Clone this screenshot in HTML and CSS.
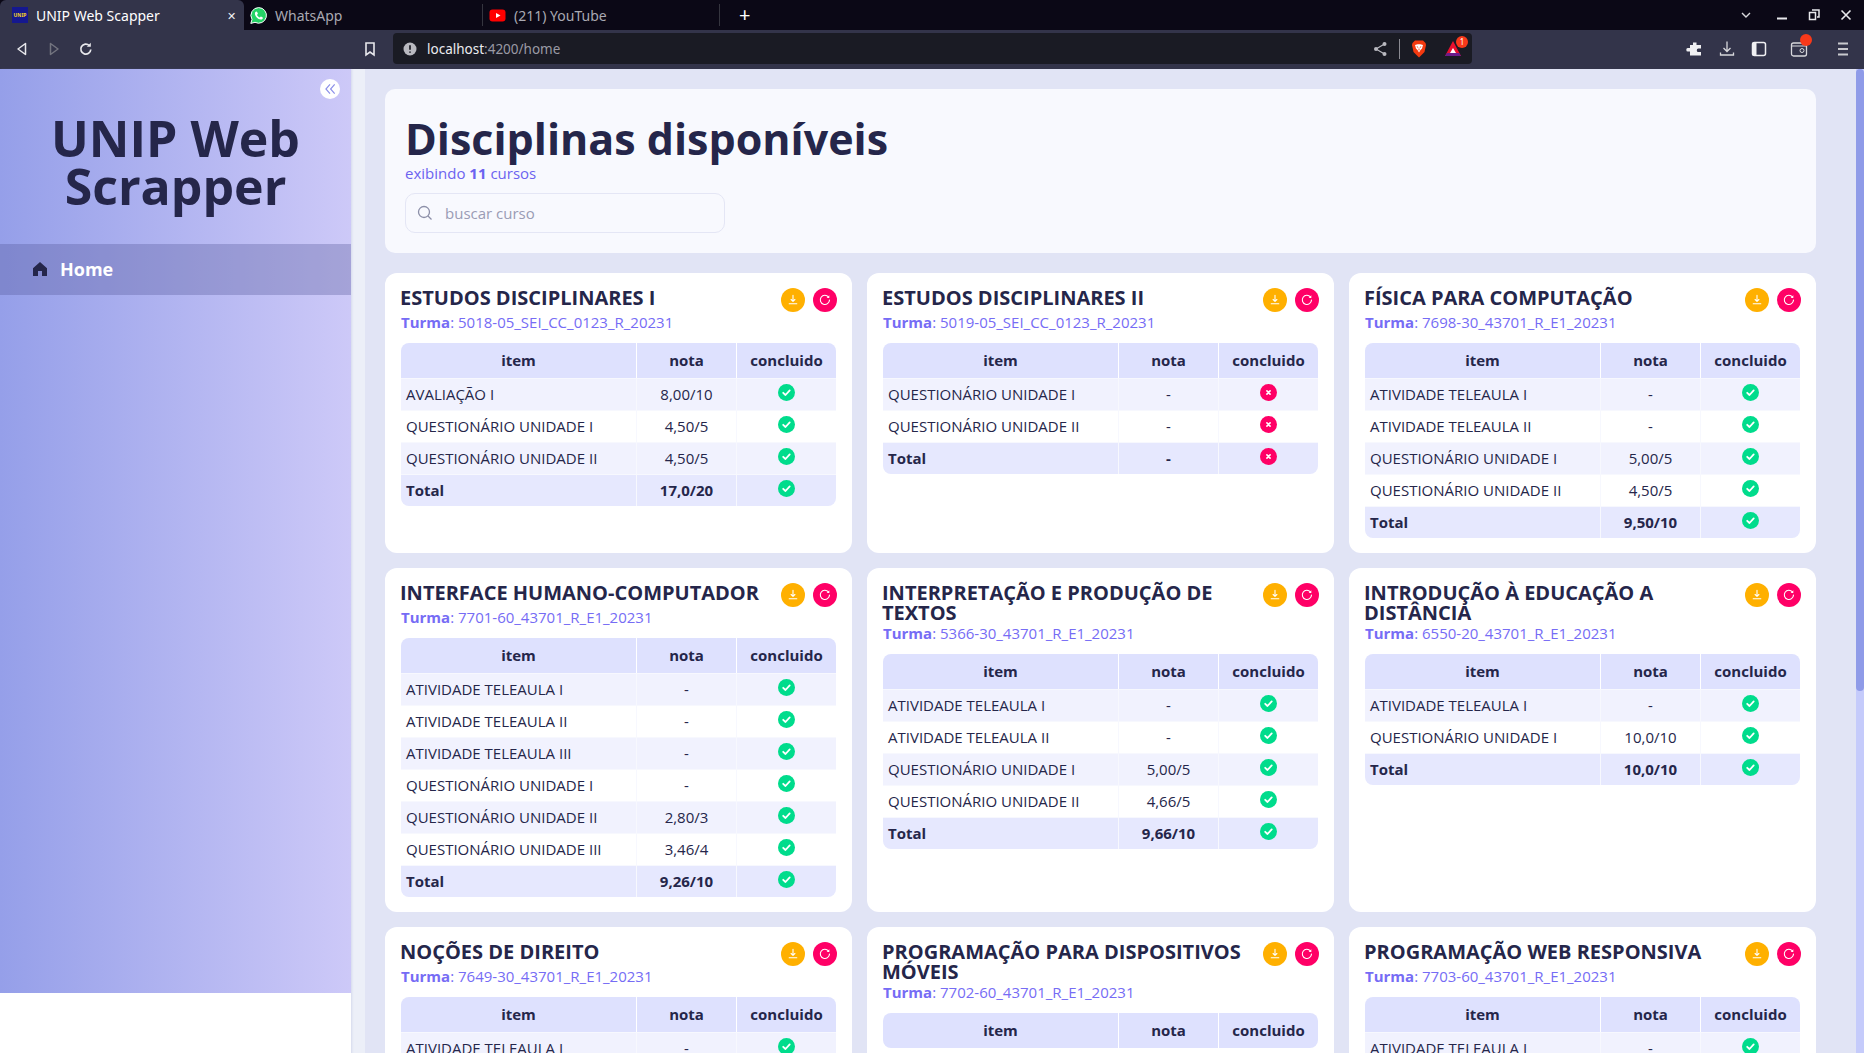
FILE: index.html
```html
<!DOCTYPE html>
<html lang="pt-BR">

<head>
    <meta charset="UTF-8">
    <title>UNIP Web Scapper</title>
    <link rel="stylesheet" href="styles.css">
</head>

<body>
    <svg class="icon-defs" width="0" height="0">
        <symbol id="ok" viewBox="0 0 17 17">
            <circle cx="8.5" cy="8.5" r="8.5" fill="#00dc8c"/>
            <path d="M5.2 8.8l2.3 2.2 4.2-4.6" fill="none" stroke="#fff" stroke-width="1.8" stroke-linecap="round" stroke-linejoin="round"/>
        </symbol>
        <symbol id="fail" viewBox="0 0 17 17">
            <circle cx="8.5" cy="8.5" r="8.5" fill="#ff0066"/>
            <path d="M6.9 6.9l3.2 3.2M10.1 6.9l-3.2 3.2" fill="none" stroke="#fff" stroke-width="1.6" stroke-linecap="round"/>
        </symbol>
        <symbol id="down" viewBox="0 0 24 24">
            <path d="M12 7.2v6M10.1 11.5L12 13.3l1.9-1.8M8.2 15.8h7.6" fill="none" stroke="#fff" stroke-width="1.1" stroke-linecap="round" stroke-linejoin="round"/>
        </symbol>
        <symbol id="redo" viewBox="0 0 24 24">
            <path d="M15.5 9a4.6 4.6 0 1 0 1 3" fill="none" stroke="#fff" stroke-width="1.1" stroke-linecap="round"/>
            <path d="M16.3 7.3v2.6h-2.6z" fill="#fff"/>
        </symbol>
    </svg>

    <!-- barra do navegador -->
    <div class="tabbar">
        <div class="tab tab-active">
            <span class="favicon-unip">UNIP</span>
            <span class="tab-title">UNIP Web Scapper</span>
            <span class="tab-close">&#10005;</span>
        </div>
        <div class="tab">
            <svg class="favicon" viewBox="0 0 17 17">
                <path d="M8.7.6a7.8 7.8 0 0 0-6.7 11.8L.8 16.4l4.2-1.1A7.8 7.8 0 1 0 8.7.6z" fill="#25d366" stroke="#fff" stroke-width="1"/>
                <path d="M6.2 4.6c-.4 0-1.3.7-1.3 2 0 2.5 3.1 6 5.9 6 1.3 0 2.1-1 2.1-1.7 0-.4-1.7-1.3-2-1.3-.4 0-.8.9-1.1.9-.8 0-2.7-1.8-2.7-2.6 0-.4.8-.7.8-1.1 0-.3-.7-2.200-1.700-2.200z" fill="#fff"/>
            </svg>
            <span class="tab-title">WhatsApp</span>
        </div>
        <div class="tab tab-sep">
            <svg class="favicon" viewBox="0 0 17 17">
                <rect x="0.5" y="2.5" width="16" height="12" rx="3" fill="#f00"/>
                <path d="M7 6l4.5 2.5L7 11z" fill="#fff"/>
            </svg>
            <span class="tab-title">(211) YouTube</span>
        </div>
        <div class="tab-new">+</div>
        <div class="window-btns">
            <svg viewBox="0 0 14 14"><path d="M3 5l4 4 4-4" fill="none" stroke="#d8d8dc" stroke-width="1.4"/></svg>
            <svg viewBox="0 0 14 14"><path d="M2 10.5h10" stroke="#e8e8ec" stroke-width="2"/></svg>
            <svg viewBox="0 0 14 14"><path d="M5 2h7v7h-2M2.500 4.500h6v7h-6z" fill="none" stroke="#e8e8ec" stroke-width="1.5"/></svg>
            <svg viewBox="0 0 14 14"><path d="M2.5 2.5l9 9M11.5 2.5l-9 9" stroke="#e8e8ec" stroke-width="1.6"/></svg>
        </div>
    </div>
    <div class="toolbar">
        <svg class="tool-icon" viewBox="0 0 18 18"><path d="M12.5 3.5v11L5 9z" fill="none" stroke="#e8e8ec" stroke-width="1.5" stroke-linejoin="round"/></svg>
        <svg class="tool-icon" viewBox="0 0 18 18"><path d="M5.5 3.5v11L13 9z" fill="none" stroke="#73747f" stroke-width="1.5" stroke-linejoin="round"/></svg>
        <svg class="tool-icon" viewBox="0 0 18 18"><path d="M13.8 9.5a5 5 0 1 1-1.5-4" fill="none" stroke="#e8e8ec" stroke-width="1.7"/><path d="M13.8 2.8v4h-4z" fill="#e8e8ec"/></svg>
        <svg class="tool-icon tool-bookmark" viewBox="0 0 18 18"><path d="M5 3h8v12l-4-3-4 3z" fill="none" stroke="#e8e8ec" stroke-width="1.6"/></svg>
        <div class="address">
            <svg class="addr-info" viewBox="0 0 14 14"><circle cx="7" cy="7" r="6.5" fill="#b9b9c0"/><path d="M7 3.200v4.600M7 9.500v1.300" stroke="#1a1b24" stroke-width="1.7"/></svg>
            <span class="addr-host">localhost</span><span class="addr-path">:4200/home</span>
            <div class="addr-right">
                <svg class="addr-share" viewBox="0 0 16 16"><path d="M12.5 3L4 8l8.5 5" fill="none" stroke="#b9b9c0" stroke-width="1.2"/><circle cx="12.5" cy="3" r="2" fill="#b9b9c0"/><circle cx="4" cy="8" r="2" fill="#b9b9c0"/><circle cx="12.5" cy="13" r="2" fill="#b9b9c0"/></svg>
                <span class="addr-line"></span>
                <svg class="addr-brave" viewBox="0 0 16 20">
                    <path d="M4 1.500h8l2.500 2.500.5 2-1.500 7L8 18.500 2.500 13 1 6l.5-2z" fill="#f4390f"/>
                    <path d="M4 6l2.700-.8h2.600L12 6l-1 3.500-1.500 1.500L8 13.500 6.500 11 5 9.500z" fill="#fff"/>
                    <path d="M5.800 7.700l1.400.7M10.200 7.700l-1.400.7M8 9.500v2" stroke="#f4390f" stroke-width="0.9"/>
                </svg>
                <div class="addr-bat">
                    <svg viewBox="0 0 18 18"><path d="M9 1l8 15H1z" fill="#e8102e"/><path d="M1 16h16l-2-3H3z" fill="#6a1b8a"/><path d="M9 8l3 5H6z" fill="#fff"/></svg>
                    <span class="bat-badge">1</span>
                </div>
            </div>
        </div>
        <div class="tool-right">
            <svg class="tool-icon" viewBox="0 0 18 18"><path d="M7 2.500h3.500v2.500H15v3.500h-2a1.800 1.800 0 1 0 0 3.500h2v3.500H4v-4H2.500a1.800 1.800 0 1 1 0-3.500H4V5h3z" fill="#f0f0f2"/></svg>
            <svg class="tool-icon" viewBox="0 0 18 18"><path d="M9 1.500v9.500M5.500 8L9 11.500 12.500 8M2.500 12.500v2.500h13v-2.500" fill="none" stroke="#d8d8dc" stroke-width="1.3"/></svg>
            <svg class="tool-icon" viewBox="0 0 18 18"><rect x="2.5" y="2.5" width="13" height="13" rx="2" fill="none" stroke="#f0f0f2" stroke-width="1.5"/><rect x="2.5" y="2.5" width="4" height="13" fill="#f0f0f2"/></svg>
            <div class="tool-wallet">
                <svg viewBox="0 0 18 18"><rect x="1.5" y="3" width="15" height="13" rx="2" fill="none" stroke="#d8d8dc" stroke-width="1.3"/><path d="M1.5 6h15" stroke="#d8d8dc"/><circle cx="12" cy="10.5" r="2" fill="none" stroke="#d8d8dc"/></svg>
                <span class="wallet-dot"></span>
            </div>
            <svg class="tool-icon" viewBox="0 0 18 18"><path d="M4 3.500h10M4 9h10M4 14.500h10" stroke="#c9c9ce" stroke-width="1.8"/></svg>
        </div>
    </div>

    <div class="app">
        <aside class="sidebar">
            <div class="sidebar-inner">
                <button class="collapse-btn">
                    <svg viewBox="0 0 12 12"><path d="M6 2L2.500 6 6 10M10 2L6.500 6 10 10" fill="none" stroke="#8b8fe8" stroke-width="1"/></svg>
                </button>
                <h2 class="brand">UNIP Web Scrapper</h2>
                <a class="nav-item">
                    <svg viewBox="0 0 16 16"><path d="M8 1l7 6.200V15H10V10H6v5H1V7.200z" fill="#25264a"/></svg>
                    <span>Home</span>
                </a>
            </div>
        </aside>

        <main class="content">
            <section class="page-head">
                <h1>Disciplinas disponíveis</h1>
                <p>exibindo <b>11</b> cursos</p>
                <div class="search">
                    <svg viewBox="0 0 16 16"><circle cx="7" cy="7" r="5.5" fill="none" stroke="#8c8fa8" stroke-width="1.3"/><path d="M11 11l3.500 3.500" stroke="#8c8fa8" stroke-width="1.3"/></svg>
                    <span>buscar curso</span>
                </div>
            </section>

            <section class="grid">
                <article class="card">
                    <div class="card-head">
                        <h3>ESTUDOS DISCIPLINARES I</h3>
                        <div class="card-btns">
                            <button class="btn-down"><svg><use href="#down"/></svg></button>
                            <button class="btn-redo"><svg><use href="#redo"/></svg></button>
                        </div>
                    </div>
                    <p class="turma"><b>Turma</b>: 5018-05_SEI_CC_0123_R_20231</p>
                    <table>
                        <thead><tr><th>item</th><th class="col">nota</th><th class="col">concluido</th></tr></thead>
                        <tbody>
                            <tr><td>AVALIAÇÃO I</td><td>8,00/10</td><td><svg class="st"><use href="#ok"/></svg></td></tr>
                            <tr><td>QUESTIONÁRIO UNIDADE I</td><td>4,50/5</td><td><svg class="st"><use href="#ok"/></svg></td></tr>
                            <tr><td>QUESTIONÁRIO UNIDADE II</td><td>4,50/5</td><td><svg class="st"><use href="#ok"/></svg></td></tr>
                            <tr class="total"><td>Total</td><td>17,0/20</td><td><svg class="st"><use href="#ok"/></svg></td></tr>
                        </tbody>
                    </table>
                </article>

                <article class="card">
                    <div class="card-head">
                        <h3>ESTUDOS DISCIPLINARES II</h3>
                        <div class="card-btns">
                            <button class="btn-down"><svg><use href="#down"/></svg></button>
                            <button class="btn-redo"><svg><use href="#redo"/></svg></button>
                        </div>
                    </div>
                    <p class="turma"><b>Turma</b>: 5019-05_SEI_CC_0123_R_20231</p>
                    <table>
                        <thead><tr><th>item</th><th class="col">nota</th><th class="col">concluido</th></tr></thead>
                        <tbody>
                            <tr><td>QUESTIONÁRIO UNIDADE I</td><td>-</td><td><svg class="st"><use href="#fail"/></svg></td></tr>
                            <tr><td>QUESTIONÁRIO UNIDADE II</td><td>-</td><td><svg class="st"><use href="#fail"/></svg></td></tr>
                            <tr class="total"><td>Total</td><td>-</td><td><svg class="st"><use href="#fail"/></svg></td></tr>
                        </tbody>
                    </table>
                </article>

                <article class="card">
                    <div class="card-head">
                        <h3>FÍSICA PARA COMPUTAÇÃO</h3>
                        <div class="card-btns">
                            <button class="btn-down"><svg><use href="#down"/></svg></button>
                            <button class="btn-redo"><svg><use href="#redo"/></svg></button>
                        </div>
                    </div>
                    <p class="turma"><b>Turma</b>: 7698-30_43701_R_E1_20231</p>
                    <table>
                        <thead><tr><th>item</th><th class="col">nota</th><th class="col">concluido</th></tr></thead>
                        <tbody>
                            <tr><td>ATIVIDADE TELEAULA I</td><td>-</td><td><svg class="st"><use href="#ok"/></svg></td></tr>
                            <tr><td>ATIVIDADE TELEAULA II</td><td>-</td><td><svg class="st"><use href="#ok"/></svg></td></tr>
                            <tr><td>QUESTIONÁRIO UNIDADE I</td><td>5,00/5</td><td><svg class="st"><use href="#ok"/></svg></td></tr>
                            <tr><td>QUESTIONÁRIO UNIDADE II</td><td>4,50/5</td><td><svg class="st"><use href="#ok"/></svg></td></tr>
                            <tr class="total"><td>Total</td><td>9,50/10</td><td><svg class="st"><use href="#ok"/></svg></td></tr>
                        </tbody>
                    </table>
                </article>

                <article class="card">
                    <div class="card-head">
                        <h3>INTERFACE HUMANO-COMPUTADOR</h3>
                        <div class="card-btns">
                            <button class="btn-down"><svg><use href="#down"/></svg></button>
                            <button class="btn-redo"><svg><use href="#redo"/></svg></button>
                        </div>
                    </div>
                    <p class="turma"><b>Turma</b>: 7701-60_43701_R_E1_20231</p>
                    <table>
                        <thead><tr><th>item</th><th class="col">nota</th><th class="col">concluido</th></tr></thead>
                        <tbody>
                            <tr><td>ATIVIDADE TELEAULA I</td><td>-</td><td><svg class="st"><use href="#ok"/></svg></td></tr>
                            <tr><td>ATIVIDADE TELEAULA II</td><td>-</td><td><svg class="st"><use href="#ok"/></svg></td></tr>
                            <tr><td>ATIVIDADE TELEAULA III</td><td>-</td><td><svg class="st"><use href="#ok"/></svg></td></tr>
                            <tr><td>QUESTIONÁRIO UNIDADE I</td><td>-</td><td><svg class="st"><use href="#ok"/></svg></td></tr>
                            <tr><td>QUESTIONÁRIO UNIDADE II</td><td>2,80/3</td><td><svg class="st"><use href="#ok"/></svg></td></tr>
                            <tr><td>QUESTIONÁRIO UNIDADE III</td><td>3,46/4</td><td><svg class="st"><use href="#ok"/></svg></td></tr>
                            <tr class="total"><td>Total</td><td>9,26/10</td><td><svg class="st"><use href="#ok"/></svg></td></tr>
                        </tbody>
                    </table>
                </article>

                <article class="card">
                    <div class="card-head">
                        <h3>INTERPRETAÇÃO E PRODUÇÃO DE TEXTOS</h3>
                        <div class="card-btns">
                            <button class="btn-down"><svg><use href="#down"/></svg></button>
                            <button class="btn-redo"><svg><use href="#redo"/></svg></button>
                        </div>
                    </div>
                    <p class="turma"><b>Turma</b>: 5366-30_43701_R_E1_20231</p>
                    <table>
                        <thead><tr><th>item</th><th class="col">nota</th><th class="col">concluido</th></tr></thead>
                        <tbody>
                            <tr><td>ATIVIDADE TELEAULA I</td><td>-</td><td><svg class="st"><use href="#ok"/></svg></td></tr>
                            <tr><td>ATIVIDADE TELEAULA II</td><td>-</td><td><svg class="st"><use href="#ok"/></svg></td></tr>
                            <tr><td>QUESTIONÁRIO UNIDADE I</td><td>5,00/5</td><td><svg class="st"><use href="#ok"/></svg></td></tr>
                            <tr><td>QUESTIONÁRIO UNIDADE II</td><td>4,66/5</td><td><svg class="st"><use href="#ok"/></svg></td></tr>
                            <tr class="total"><td>Total</td><td>9,66/10</td><td><svg class="st"><use href="#ok"/></svg></td></tr>
                        </tbody>
                    </table>
                </article>

                <article class="card">
                    <div class="card-head">
                        <h3>INTRODUÇÃO À EDUCAÇÃO A DISTÂNCIA</h3>
                        <div class="card-btns">
                            <button class="btn-down"><svg><use href="#down"/></svg></button>
                            <button class="btn-redo"><svg><use href="#redo"/></svg></button>
                        </div>
                    </div>
                    <p class="turma"><b>Turma</b>: 6550-20_43701_R_E1_20231</p>
                    <table>
                        <thead><tr><th>item</th><th class="col">nota</th><th class="col">concluido</th></tr></thead>
                        <tbody>
                            <tr><td>ATIVIDADE TELEAULA I</td><td>-</td><td><svg class="st"><use href="#ok"/></svg></td></tr>
                            <tr><td>QUESTIONÁRIO UNIDADE I</td><td>10,0/10</td><td><svg class="st"><use href="#ok"/></svg></td></tr>
                            <tr class="total"><td>Total</td><td>10,0/10</td><td><svg class="st"><use href="#ok"/></svg></td></tr>
                        </tbody>
                    </table>
                </article>

                <article class="card">
                    <div class="card-head">
                        <h3>NOÇÕES DE DIREITO</h3>
                        <div class="card-btns">
                            <button class="btn-down"><svg><use href="#down"/></svg></button>
                            <button class="btn-redo"><svg><use href="#redo"/></svg></button>
                        </div>
                    </div>
                    <p class="turma"><b>Turma</b>: 7649-30_43701_R_E1_20231</p>
                    <table>
                        <thead><tr><th>item</th><th class="col">nota</th><th class="col">concluido</th></tr></thead>
                        <tbody>
                            <tr><td>ATIVIDADE TELEAULA I</td><td>-</td><td><svg class="st"><use href="#ok"/></svg></td></tr>
                        </tbody>
                    </table>
                </article>

                <article class="card">
                    <div class="card-head">
                        <h3>PROGRAMAÇÃO PARA DISPOSITIVOS MÓVEIS</h3>
                        <div class="card-btns">
                            <button class="btn-down"><svg><use href="#down"/></svg></button>
                            <button class="btn-redo"><svg><use href="#redo"/></svg></button>
                        </div>
                    </div>
                    <p class="turma"><b>Turma</b>: 7702-60_43701_R_E1_20231</p>
                    <table>
                        <thead><tr><th>item</th><th class="col">nota</th><th class="col">concluido</th></tr></thead>
                    </table>
                </article>

                <article class="card">
                    <div class="card-head">
                        <h3>PROGRAMAÇÃO WEB RESPONSIVA</h3>
                        <div class="card-btns">
                            <button class="btn-down"><svg><use href="#down"/></svg></button>
                            <button class="btn-redo"><svg><use href="#redo"/></svg></button>
                        </div>
                    </div>
                    <p class="turma"><b>Turma</b>: 7703-60_43701_R_E1_20231</p>
                    <table>
                        <thead><tr><th>item</th><th class="col">nota</th><th class="col">concluido</th></tr></thead>
                        <tbody>
                            <tr><td>ATIVIDADE TELEAULA I</td><td>-</td><td><svg class="st"><use href="#ok"/></svg></td></tr>
                        </tbody>
                    </table>
                </article>
            </section>
        </main>

        <div class="scrollbar"><div class="scroll-thumb"></div></div>
    </div>
</body>

</html>
```

FILE: styles.css
```css
* {
    box-sizing: border-box;
}

body {
    margin: 0;
    height: 100vh;
    overflow: hidden;
    display: flex;
    flex-direction: column;
    font-family: "Open Sans", sans-serif;
    color: #25264a;
    background: #fff;
}

.icon-defs {
    position: absolute;
}

/* barra do navegador */
.tabbar {
    height: 30px;
    flex: none;
    display: flex;
    align-items: center;
    background: #0b0816;
    font-family: "Noto Sans", sans-serif;
    font-size: 14px;
}

.tab {
    width: 238px;
    height: 30px;
    display: flex;
    align-items: center;
    padding-left: 6px;
    color: #a9a9b2;
}

.tab-active {
    width: 244px;
    padding-left: 12px;
    background: #33344a;
    border-radius: 6px 6px 0 0;
    color: #fff;
}

.tab-sep {
    border-left: 1px solid #35353f;
    border-right: 1px solid #35353f;
    height: 22px;
}

.tab-title {
    margin-left: 8px;
    white-space: nowrap;
}

.tab-close {
    margin-left: auto;
    margin-right: 8px;
    font-size: 11px;
    color: #f0f0f2;
}

.favicon {
    width: 17px;
    height: 17px;
    flex: none;
}

.favicon-unip {
    width: 16px;
    height: 16px;
    flex: none;
    background: #15188f;
    color: #f2d21f;
    font-size: 5px;
    font-weight: bold;
    line-height: 16px;
    text-align: center;
}

.tab-new {
    margin-left: 19px;
    color: #fff;
    font-size: 20px;
    line-height: 30px;
}

.window-btns {
    margin-left: auto;
    margin-right: 11px;
    display: flex;
    gap: 18px;
}

.window-btns svg {
    width: 14px;
    height: 14px;
}

.window-btns svg:first-child {
    margin-right: 4px;
}

.toolbar {
    height: 39px;
    flex: none;
    display: flex;
    align-items: center;
    padding: 0 0 2px 13px;
    background: #33344a;
    font-family: "Noto Sans", sans-serif;
}

.tool-icon {
    width: 18px;
    height: 18px;
    flex: none;
    margin-right: 14px;
}

.tool-bookmark {
    margin-left: 252px;
    margin-right: 14px;
}

.address {
    width: 1079px;
    height: 31px;
    flex: none;
    display: flex;
    align-items: center;
    padding: 0 10px;
    border-radius: 4px;
    background: #1a1b24;
    font-size: 13.5px;
}

.addr-info {
    width: 14px;
    height: 14px;
    margin-right: 10px;
}

.addr-host {
    color: #ececf0;
}

.addr-path {
    color: #9a9aa5;
}

.addr-right {
    margin-left: auto;
    display: flex;
    align-items: center;
}

.addr-share {
    width: 16px;
    height: 16px;
}

.addr-line {
    width: 1px;
    height: 20px;
    margin: 0 11px;
    background: #8a8a92;
}

.addr-brave {
    width: 16px;
    height: 20px;
}

.addr-bat {
    position: relative;
    width: 18px;
    height: 18px;
    margin-left: 17px;
}

.addr-bat svg {
    width: 18px;
    height: 18px;
}

.bat-badge {
    position: absolute;
    top: -4px;
    right: -6px;
    width: 12px;
    height: 12px;
    border-radius: 50%;
    background: #f8391a;
    color: #fff;
    font-size: 8px;
    line-height: 12px;
    text-align: center;
}

.tool-right {
    margin-left: 214px;
    display: flex;
    align-items: center;
}

.tool-right .tool-icon:last-child {
    margin-right: 0;
}

.tool-wallet {
    position: relative;
    width: 18px;
    height: 18px;
    margin: 0 26px 0 8px;
}

.tool-wallet svg {
    width: 18px;
    height: 18px;
}

.wallet-dot {
    position: absolute;
    top: -6px;
    right: -4px;
    width: 12px;
    height: 12px;
    border-radius: 50%;
    background: #f8391a;
}

/* layout da pagina */
.app {
    flex: 1;
    display: flex;
    min-height: 0;
}

.sidebar {
    width: 365px;
    flex: none;
    background: #eceff8;
}

.sidebar-inner {
    position: relative;
    width: 351px;
    height: 1100px;
    padding-top: 45px;
    background: #fff;
    box-shadow: 1px 0 2px rgba(120, 125, 190, 0.2);
}

.sidebar-inner::before {
    content: "";
    position: absolute;
    inset: 0 0 auto 0;
    height: 924px;
    background: linear-gradient(to right, #959fe9, #cdc9f8);
}

.collapse-btn {
    position: absolute;
    top: 10px;
    right: 11px;
    width: 20px;
    height: 20px;
    padding: 3px;
    border: none;
    border-radius: 50%;
    background: #fff;
}

.collapse-btn svg {
    display: block;
    width: 14px;
    height: 14px;
}

.brand {
    position: relative;
    margin: 0 auto;
    width: 290px;
    font-size: 50px;
    line-height: 48px;
    text-align: center;
    font-weight: 700;
}

.nav-item {
    position: relative;
    height: 51px;
    margin-top: 34px;
    display: flex;
    align-items: center;
    gap: 12px;
    padding: 0 0 2px 32px;
    background: rgba(80, 85, 150, 0.32);
    color: #fff;
    font-size: 18px;
    font-weight: 700;
}

.nav-item svg {
    width: 16px;
    height: 16px;
}

.content {
    flex: 1;
    min-width: 0;
    padding: 20px 40px 0 20px;
    background: #e1e4f5;
}

.page-head {
    height: 164px;
    padding: 26px 20px 0;
    margin-bottom: 20px;
    border-radius: 10px;
    background: #f8f9fe;
}

.page-head h1 {
    margin: 0;
    font-size: 43px;
    line-height: 48px;
    font-weight: 700;
}

.page-head p {
    margin: 0;
    font-size: 15px;
    line-height: 20px;
    color: #6c63f0;
}

.search {
    width: 320px;
    height: 40px;
    margin-top: 10px;
    display: flex;
    align-items: center;
    gap: 12px;
    padding-left: 11px;
    border: 1px solid #e4e6f5;
    border-radius: 10px;
    font-size: 15px;
    color: #9a9cb5;
}

.search svg {
    width: 16px;
    height: 16px;
}

.grid {
    display: grid;
    grid-template-columns: repeat(3, 1fr);
    gap: 15px;
}

.card {
    padding: 15px 16px;
    border-radius: 12px;
    background: #fff;
}

.card-head {
    display: flex;
    justify-content: space-between;
    min-height: 24px;
}

.card-head h3 {
    margin: 0 0 0 -1px;
    font-size: 20px;
    line-height: 20px;
    font-weight: 700;
}

.card-btns {
    display: flex;
    flex: none;
    gap: 8px;
    height: 24px;
    margin-left: 16px;
    margin-right: -1px;
}

.card-btns button {
    width: 24px;
    height: 24px;
    padding: 0;
    border: none;
    border-radius: 50%;
}

.card-btns svg {
    display: block;
    width: 24px;
    height: 24px;
}

.btn-down {
    background: #ffb000;
}

.btn-redo {
    background: #ff0066;
}

.turma {
    margin: 0 0 11px;
    font-size: 15px;
    line-height: 20px;
    color: #766cf5;
}

table {
    width: 100%;
    table-layout: fixed;
    border-collapse: separate;
    border-spacing: 0;
    font-size: 15px;
    border-radius: 8px;
    overflow: hidden;
}

th {
    height: 35px;
    padding: 0 0 1px;
    background: #dee1fe;
    font-size: 15px;
    font-weight: 700;
    text-align: center;
    border-left: 1px solid #fff;
}

.col {
    width: 100px;
}

td {
    height: 32px;
    padding: 0 0 2px;
    text-align: center;
    border-top: 1px solid #f7f8fe;
    border-left: 1px solid #f7f8fe;
}

th:first-child,
td:first-child {
    border-left: none;
}

td:first-child {
    padding-left: 5px;
    text-align: left;
}

tbody tr:nth-child(odd) td {
    background: #f1f2fe;
}

tbody tr.total td {
    background: #e6e8fe;
    font-weight: 700;
}

.st {
    display: block;
    width: 17px;
    height: 17px;
    margin: -3px auto 0;
}

.scrollbar {
    width: 8px;
    flex: none;
    background: #c5cbfb;
}

.scroll-thumb {
    height: 622px;
    border-radius: 4px;
    background: #8f9be8;
}
```
